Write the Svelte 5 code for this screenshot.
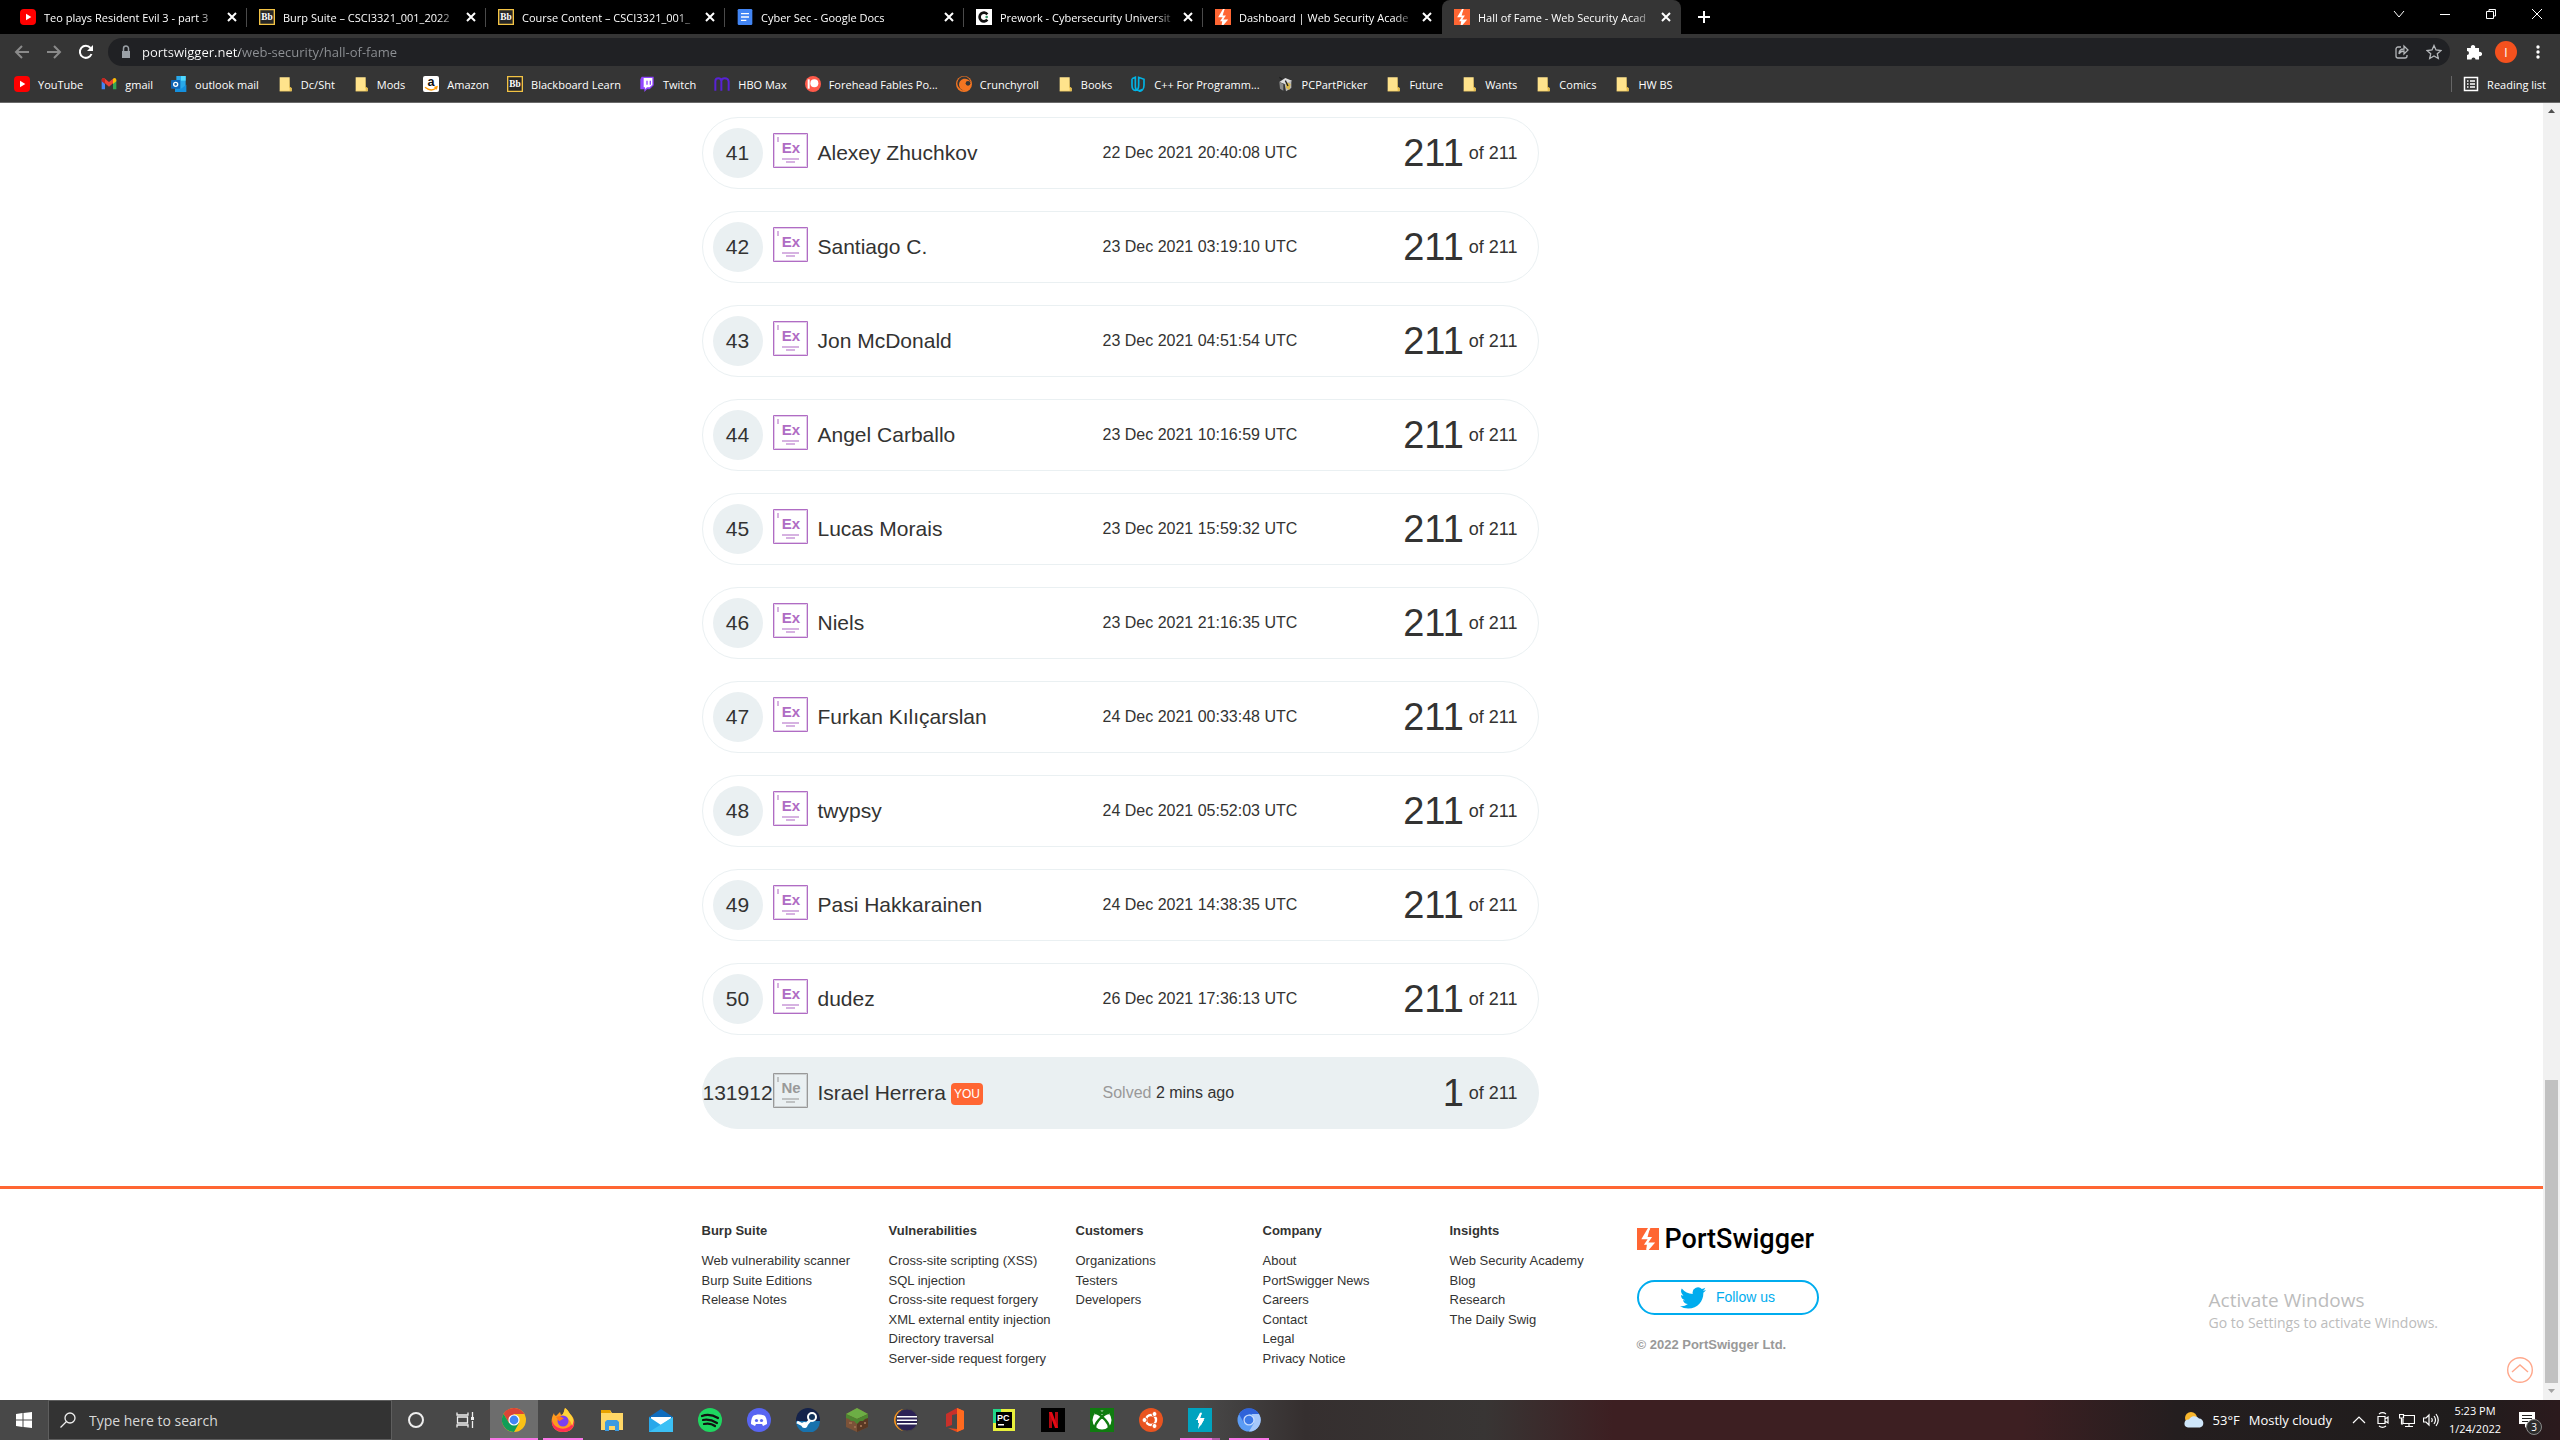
<script>
  const bolt = '<path d="M0 0h24v24H0z" fill="#f63"/><path d="M13.500 0 7 11h7l-4 6h7l-6 7" fill="none" stroke="#fff" stroke-width="2.600"/><path d="M14 0 6 12h5zm-3 17h7l-8 7z" fill="#fff"/>';
  const bb = '<path d="M1 1h22v22H1z" fill="#262626" stroke="#f3c344" stroke-width="2"/><text x="12" y="17" font-size="14" font-weight="700" font-family="Liberation Serif, serif" text-anchor="middle" fill="#fff">Bb</text>';
  const youtube = '<rect width="24" height="24" rx="6" fill="#f00"/><path d="m9 7 8 5-8 5z" fill="#fff"/>';
  const folder = '<path d="M4 2h15v15l3 1v5H4z" fill="#ffe38c"/><path d="M19 2v14l3 2v5H4v-1h15v-4l-1-1" fill="#e9bf4c"/>';

  const art = {
    bolt,
    bb,
    youtube,
    folder,
    docs: '<rect x="1" width="22" height="24" rx="2" fill="#4285f4"/><path d="M6 6h12v2H6zm0 5h12v2H6zm0 5h8v2H6z" fill="#fff"/>',
    prework: '<path d="M0 0h24v24H0z" fill="#fff"/><path d="M17 8a6.500 6.500 0 1 0 0 8" fill="none" stroke="#111" stroke-width="4"/><circle cx="16" cy="12" r="2" fill="#3a9b6a"/>',
    gmail: '<path d="M1 6v14h5V11z" fill="#4285f4"/><path d="M23 6v14h-5V11z" fill="#34a853"/><path d="M1 6c0-3 3-3 5-2l6 5 6-5v7l-6 5-6-5z" fill="#ea4335"/><path d="m18 4c2-2 5-1 5 2v2l-5 4z" fill="#fbbc04"/><path d="M1 6c0-3 3-3 5-2v8L1 8z" fill="#c5221f"/>',
    outlook: '<path d="M8 0h14v22H8z" fill="#28a8ea"/><path d="M15 0h7v7h-7z" fill="#50d9ff"/><path d="m6 14 9 5 8-6v11H6z" fill="#1490df"/><rect y="6" width="14" height="13" rx="1" fill="#0f64b4"/><circle cx="7" cy="12.500" r="3" fill="none" stroke="#fff" stroke-width="2"/>',
    amazon: '<rect width="24" height="24" rx="3" fill="#fff"/><text x="12" y="15" font-size="19" font-weight="700" font-family="Liberation Sans, sans-serif" text-anchor="middle" fill="#111">a</text><path d="M3 17c6 5 12 5 17 1m-3-1 4-1-1 4" fill="none" stroke="#f90" stroke-width="2"/>',
    twitch: '<path d="M4 1h18v13l-6 6h-4l-4 4v-4H2V5z" fill="#9146ff"/><path d="M7 3h13v10l-4 4h-4l-3 3v-3H7z" fill="#fff"/><path d="M11 7h2v6h-2zm5 0h2v6h-2z" fill="#9146ff"/>',
    hbo: '<path d="M2 22V8c0-6 9-6 9 0v14M11 8c0-6 10-6 11 0v14" fill="none" stroke="#5822d4" stroke-width="3"/>',
    patreon: '<circle cx="12" cy="12" r="12" fill="#ff5a4a"/><circle cx="14" cy="11" r="6" fill="#fff"/><path d="M4 5h3v14H4z" fill="#fff"/>',
    crunchyroll: '<circle cx="12" cy="12" r="12" fill="#f47521"/><path d="M5 18a10 10 0 1 1 17-8 9 9 0 1 0-8 12 10 10 0 0 1-9-4" fill="#353535"/><circle cx="15" cy="14" r="7" fill="#f47521"/><circle cx="18" cy="11" r="3.500" fill="#353535"/>',
    udacity: '<path d="M3 4v10c0 10 10 10 10 0V2l8 3v9c0 6-4 9-8 9M3 4l5-2v14c0 5 6 8 10 4" fill="none" stroke="#02b3e4" stroke-width="2.500"/>',
    pcpart: '<path d="m2 9 9-6 10 4-8 6z" fill="#ddd"/><path d="m2 9 6 3v10l-5-3z" fill="#8b8b8b"/><path d="m10 12 10-5v11l-8 5z" fill="#bbb"/><path d="m12 9 7 3-2 9-5-3z" fill="#d9b84b"/><path d="M6 5 2 2m9 5 4 8" stroke="#222" stroke-width="2"/>',
    chrome: '<circle cx="12" cy="12" r="12" fill="#fbc116"/><path d="M1.600 6A12 12 0 0 1 22.400 6H12L7 15z" fill="#db4437"/><path d="M1.600 6A12 12 0 0 0 12 24l5-9H7z" fill="#109d58"/><circle cx="12" cy="12" r="5.600" fill="#fff"/><circle cx="12" cy="12" r="4.400" fill="#4285f4"/>',
    firefox: '<path d="M14 0c4 3 4 5 6 7 6 6 4 17-8 17C1 24-2 13 3 5c0 2 1 2 2 3l4-4 1 3c3 0 3-5 4-7" fill="#ff9a1f"/><path d="M1 12c1 9 17 14 22 0 1 8-4 12-11 12S0 19 1 12" fill="#ff2d55"/><path d="M14 0c4 3 4 5 6 7 3 4 3 8 1 11-1-7-7-9-11-11 3 0 3-5 4-7" fill="#ffd43a"/><circle cx="12" cy="13" r="5.500" fill="#7a3ff0"/><path d="M5 9c4-2 6 0 8 2-3 0-3 2-5 2" fill="#ff7a18"/>',
    explorer: '<path d="M1 2h9l2 3h11v17H1z" fill="#ffd766"/><path d="M1 2h9l1 3H1z" fill="#e8a200"/><path d="M5 23v-9l2-2h10l2 2v9h-4v-5H9v5z" fill="#3c9be0"/>',
    mail: '<path d="m0 9 12-8 12 8v14H0z" fill="#0f6cbd"/><path d="M2 9h20v8H2z" fill="#fff"/><path d="m0 9 12 8 12-8v15H0z" fill="#28a8ea"/><path d="M0 24 24 9v15z" fill="#3bc0f5"/>',
    spotify: '<circle cx="12" cy="12" r="12" fill="#1ed760"/><path d="M4 8c5-2 11-1 16 2M5 12c5-1 9 0 14 3M6 16c4-1 7-1 11 2" fill="none" stroke="#111" stroke-width="2.200" stroke-linecap="round"/>',
    discord: '<circle cx="12" cy="12" r="12" fill="#5865f2"/><path d="M6 8c3-2 9-2 12 0 2 3 2 6 2 8l-4 2-1-2H9l-1 2-4-2c0-2 0-5 2-8" fill="#fff"/><circle cx="9.500" cy="12.500" r="1.600" fill="#5865f2"/><circle cx="14.500" cy="12.500" r="1.600" fill="#5865f2"/>',
    steam: '<circle cx="12" cy="12" r="12" fill="#14224a"/><path d="M0 13a12 12 0 0 0 24 0z" fill="#1872ad"/><path d="m1 14 8 4 7-8" stroke="#fff" stroke-width="3" fill="none"/><circle cx="16" cy="9" r="4" fill="#14345c" stroke="#fff" stroke-width="2"/><circle cx="8.500" cy="17" r="3" fill="#fff"/>',
    minecraft: '<path d="m1 6 11-6 11 6v13l-11 5L1 19z" fill="#7b5238"/><path d="M12 11v13l11-5V6z" fill="#593823"/><path d="m1 6 11-6 11 6-11 5z" fill="#6cae45"/><path d="m1 6 11 5 11-5v4l-3 1-2 2-3 0-3 3-3-3-3 0-2-2-3-1z" fill="#4d8630"/><path d="M4 14h3v2H4zm5 4h2v2H9zm6-1h2v2h-2zm4-3h2v2h-2z" fill="#9a6c4c"/>',
    eclipse: '<circle cx="11" cy="12" r="11" fill="#f7941e"/><circle cx="13" cy="12" r="11" fill="#2c2255" stroke="#444" stroke-width="1"/><path d="M3 8h20v1.500H3zm0 3.500h20V13H3zM3 15h20v1.500H3z" fill="#fff"/>',
    office: '<path d="m14 0 7 3v18l-7 3-9-4 9 1z" fill="#e8481c"/><path d="M14 0v24l7-3V3z" fill="#ff6a1f"/><path d="M3 6v13l6-2V7l5-1V0z" fill="#c8302a"/>',
    pycharm: '<path d="M1 1h22v22H1z" fill="#e8f03c"/><path d="M1 1h8v14H1z" fill="#21d789"/><path d="M4 4h16v16H4z"/><text x="5" y="13" font-size="9" font-weight="700" font-family="Liberation Sans, sans-serif" fill="#fff">PC</text><path d="M6 16h6v1.500H6z" fill="#fff"/>',
    netflix: '<path d="M0 0h24v24H0z"/><path d="M8 4h3v16H8zm6 0h3v16h-3z" fill="#b00710"/><path d="M8 4h3l6 16h-3z" fill="#e50914"/>',
    xbox: '<path d="M0 0h24v24H0z" fill="#107c10"/><circle cx="12" cy="12" r="9.500" fill="#fff"/><path d="M5 5c4 0 7 4 7 4s3-4 7-4M5 20c0-6 7-11 7-11s7 5 7 11M7 3c2 0 5 2 5 2s3-2 5-2" fill="none" stroke="#107c10" stroke-width="2.400"/>',
    ubuntu: '<circle cx="12" cy="12" r="12" fill="#e95420"/><circle cx="12" cy="12" r="5" fill="none" stroke="#fff" stroke-width="2.400"/><g fill="#fff" stroke="#e95420"><circle cx="5.500" cy="12" r="2.500"/><circle cx="15.500" cy="6" r="2.500"/><circle cx="15.500" cy="18" r="2.500"/></g>',
    burp: '<path d="M0 0h24v24H0z" fill="#00a3bf"/><path d="m14 4-6 8h5l-1-1zm-4 8h6l-6 9 1-6h-1z" fill="#fff"/><path d="m13 5-3 6h5l-3 6" fill="none" stroke="#fff" stroke-width="2"/>',
    chromium: '<circle cx="12" cy="12" r="11.500" fill="#5b9cf5"/><path d="M2 6A11.500 11.500 0 0 1 22 6H12l-5 9z" fill="#2f62d9"/><path d="M22 6a11.500 11.500 0 0 1-10 17.500L17 15l-2-9z" fill="#a6c8fb"/><circle cx="12" cy="12" r="5.600" fill="#c8dcfd"/><circle cx="12" cy="12" r="4.300" fill="#3b78e7"/>',
    cortana: '<circle cx="12" cy="12" r="7" fill="none" stroke="#eee" stroke-width="2"/>',
    taskview: '<path d="M4 4.500V7h11V4.500M4 19.500V17h11v2.500M4.500 9h10v6h-10zM19.500 4v5m0 4v7" fill="none" stroke="#eee" stroke-width="1.300"/><path d="M18 9h3v3h-3z" fill="#eee"/>'
  };

  const tabs = [
    { icon: 'youtube', title: 'Teo plays Resident Evil 3 - part 3' },
    { icon: 'bb', title: 'Burp Suite – CSCI3321_001_2022' },
    { icon: 'bb', title: 'Course Content – CSCI3321_001_' },
    { icon: 'docs', title: 'Cyber Sec - Google Docs' },
    { icon: 'prework', title: 'Prework - Cybersecurity Universit' },
    { icon: 'bolt', title: 'Dashboard | Web Security Acade' },
    { icon: 'bolt', title: 'Hall of Fame - Web Security Acad', active: true }
  ];

  const bookmarks = [
    ['youtube', 'YouTube'], ['gmail', 'gmail'], ['outlook', 'outlook mail'], ['folder', 'Dc/Sht'],
    ['folder', 'Mods'], ['amazon', 'Amazon'], ['bb', 'Blackboard Learn'], ['twitch', 'Twitch'],
    ['hbo', 'HBO Max'], ['patreon', 'Forehead Fables Po...'], ['crunchyroll', 'Crunchyroll'],
    ['folder', 'Books'], ['udacity', 'C++ For Programm...'], ['pcpart', 'PCPartPicker'],
    ['folder', 'Future'], ['folder', 'Wants'], ['folder', 'Comics'], ['folder', 'HW BS']
  ];

  const players = [
    { rank: 41, name: 'Alexey Zhuchkov', date: '22 Dec 2021 20:40:08 UTC', solved: 211 },
    { rank: 42, name: 'Santiago C.', date: '23 Dec 2021 03:19:10 UTC', solved: 211 },
    { rank: 43, name: 'Jon McDonald', date: '23 Dec 2021 04:51:54 UTC', solved: 211 },
    { rank: 44, name: 'Angel Carballo', date: '23 Dec 2021 10:16:59 UTC', solved: 211 },
    { rank: 45, name: 'Lucas Morais', date: '23 Dec 2021 15:59:32 UTC', solved: 211 },
    { rank: 46, name: 'Niels', date: '23 Dec 2021 21:16:35 UTC', solved: 211 },
    { rank: 47, name: 'Furkan Kılıçarslan', date: '24 Dec 2021 00:33:48 UTC', solved: 211 },
    { rank: 48, name: 'twypsy', date: '24 Dec 2021 05:52:03 UTC', solved: 211 },
    { rank: 49, name: 'Pasi Hakkarainen', date: '24 Dec 2021 14:38:35 UTC', solved: 211 },
    { rank: 50, name: 'dudez', date: '26 Dec 2021 17:36:13 UTC', solved: 211 },
    { rank: 131912, name: 'Israel Herrera', date: '2 mins ago', solved: 1, you: true }
  ];

  const footer = [
    ['Burp Suite', ['Web vulnerability scanner', 'Burp Suite Editions', 'Release Notes']],
    ['Vulnerabilities', ['Cross-site scripting (XSS)', 'SQL injection', 'Cross-site request forgery', 'XML external entity injection', 'Directory traversal', 'Server-side request forgery']],
    ['Customers', ['Organizations', 'Testers', 'Developers']],
    ['Company', ['About', 'PortSwigger News', 'Careers', 'Contact', 'Legal', 'Privacy Notice']],
    ['Insights', ['Web Security Academy', 'Blog', 'Research', 'The Daily Swig']]
  ];

  const apps = [
    ['cortana', 'Cortana', ''], ['taskview', 'Task View', ''], ['chrome', 'Chrome', 'current'],
    ['firefox', 'Firefox', 'running'], ['explorer', 'File Explorer', ''], ['mail', 'Mail', ''],
    ['spotify', 'Spotify', ''], ['discord', 'Discord', ''], ['steam', 'Steam', ''],
    ['minecraft', 'Minecraft', ''], ['eclipse', 'Eclipse', ''], ['office', 'Office', ''],
    ['pycharm', 'PyCharm', ''], ['netflix', 'Netflix', ''], ['xbox', 'Xbox', ''],
    ['ubuntu', 'Ubuntu', ''], ['burp', 'Burp Suite', 'running stacked'], ['chromium', 'Chromium', 'running']
  ];

  let address = $state('portswigger.net/web-security/hall-of-fame');
  let query = $state('');
</script>

{#snippet pic(name, size)}
  <svg class="pic {size}" viewBox="0 0 24 24" aria-hidden="true">{@html art[name]}</svg>
{/snippet}

<div class="desktop">
  <header class="browser">
    <div class="tabstrip">
      {#each tabs as tab}
        <div class="tab" class:active={tab.active}>
          {@render pic(tab.icon, 'small')}
          <span class="title">{tab.title}</span>
          <button class="close" aria-label="Close tab">
            <svg width="16" height="16" viewBox="0 0 16 16"><path d="m4 4 8 8m0-8-8 8" /></svg>
          </button>
        </div>
      {/each}
      <button class="newtab" aria-label="New tab">
        <svg width="16" height="16" viewBox="0 0 16 16"><path d="M8 2v12M2 8h12" /></svg>
      </button>
      <div class="winbuttons">
        <button aria-label="Search tabs"><svg width="12" height="12" viewBox="0 0 12 12"><path d="m1 3 5 6 5-6" /></svg></button>
        <button aria-label="Minimize"><svg width="12" height="12" viewBox="0 0 12 12"><path d="M1 6.500h10" /></svg></button>
        <button aria-label="Restore"><svg width="12" height="12" viewBox="0 0 12 12"><path d="M1.500 3.500h7v7h-7zM4 3.500v-2h6.500V8h-2" /></svg></button>
        <button aria-label="Close"><svg width="12" height="12" viewBox="0 0 12 12"><path d="m1 1 10 10m0-10L1 11" /></svg></button>
      </div>
    </div>

    <div class="toolbar">
      <button class="tool dim" aria-label="Back"><svg width="16" height="16" viewBox="0 0 16 16"><path d="M15 8H2m6-6L2 8l6 6" /></svg></button>
      <button class="tool dim" aria-label="Forward"><svg width="16" height="16" viewBox="0 0 16 16"><path d="M1 8h13M8 2l6 6-6 6" /></svg></button>
      <button class="tool" aria-label="Reload"><svg width="16" height="16" viewBox="0 0 16 16"><path d="M13.500 10A6 6 0 1 1 12.500 4" stroke-width="2" /><path d="M15 1v6H9z" fill="#fff" stroke="none" /></svg></button>
      <label class="address">
        <svg width="16" height="16" viewBox="0 0 16 16"><path d="M4 7h8v7H4z" fill="#9aa0a6" /><path d="M5.500 7V4.500a2.500 2.500 0 0 1 5 0V7" stroke="#9aa0a6" stroke-width="1.500" fill="none" /></svg>
        <input type="text" aria-label="Address" bind:value={address} />
        <button class="tool grey" aria-label="Share"><svg width="16" height="16" viewBox="0 0 16 16"><path d="M7 3H4a2 2 0 0 0-2 2v7a2 2 0 0 0 2 2h7a2 2 0 0 0 2-2v-1M5 10c0-3 2-5 5-5V2l4 4-4 4V7c-2 0-4 1-5 3" /></svg></button>
        <button class="tool grey" aria-label="Bookmark"><svg width="16" height="16" viewBox="0 0 16 16"><path d="m8 1.500 2 4.500 5 .5-3.700 3.300 1 4.700L8 12l-4.300 2.500 1-4.700L1 6.500 6 6z" /></svg></button>
      </label>
      <div class="toolend">
        <button class="tool" aria-label="Extensions"><svg width="16" height="16" viewBox="0 0 16 16"><path d="M1 4h4a2.200 2.200 0 1 1 4 0h4v4a2.200 2.200 0 1 1 0 4v3.500H9.500a2 2 0 1 0-4 0H1V11a2 2 0 1 0 0-4z" fill="#fff" stroke="none" /></svg></button>
        <button class="avatar" aria-label="Profile">I</button>
        <button class="tool" aria-label="Menu"><svg width="16" height="16" viewBox="0 0 16 16"><g fill="#fff" stroke="none"><circle cx="8" cy="3" r="1.700" /><circle cx="8" cy="8" r="1.700" /><circle cx="8" cy="13" r="1.700" /></g></svg></button>
      </div>
    </div>

    <nav class="bookmarks">
      {#each bookmarks as [icon, label]}
        <a href="#top">{@render pic(icon, 'small')}{label}</a>
      {/each}
      <button class="reading">
        <svg width="16" height="16" viewBox="0 0 16 16"><path d="M1.500 1.500h13v13h-13z" stroke-width="1.500" /><path d="M4 5h1.500M4 8h1.500M4 11h1.500M7 5h5M7 8h5M7 11h5" stroke-width="1.500" /></svg>
        Reading list
      </button>
    </nav>
  </header>

  <div class="viewport">
    <div class="page" id="top">
      <main class="wrap">
        <table class="fame" aria-label="Hall of Fame">
          <tbody>
            {#each players as p}
              <tr class:you={p.you}>
                <td class="rank"><span>{p.rank}</span></td>
                <td class="level">
                  <svg width="35" height="35" viewBox="0 0 35 35">
                    <path d="M.5.5h34v34H.5z" />
                    <path class="inner" d="M1.500 1.500h32v32h-32z" />
                    <path class="rule" d="M5 4v5" />
                    <text x="18" y="20" text-anchor="middle">{p.you ? 'Ne' : 'Ex'}</text>
                    <path class="rule" d="M9 26h17M13 29h9" />
                  </svg>
                </td>
                <td class="name">{p.name}{#if p.you}<span class="tag">YOU</span>{/if}</td>
                <td class="date">{#if p.you}<span>Solved</span>{' '}{/if}{p.date}</td>
                <td class="score"><strong>{p.solved}</strong><span>of 211</span></td>
              </tr>
            {/each}
          </tbody>
        </table>
      </main>

      <footer>
        <div class="wrap columns">
          {#each footer as [heading, links]}
            <section>
              <h2>{heading}</h2>
              <ul>
                {#each links as link}<li><a href="#top">{link}</a></li>{/each}
              </ul>
            </section>
          {/each}
          <section class="brand">
            <a class="logo" href="#top">
              <svg width="22" height="22" viewBox="0 0 24 24" aria-hidden="true">{@html art.bolt}</svg>PortSwigger
            </a>
            <a class="follow" href="#top">
              <svg width="26" height="26" viewBox="0 0 24 24" aria-hidden="true"><path fill="#00acee" d="M23.950 4.570a10 10 0 0 1-2.820.77 4.960 4.960 0 0 0 2.160-2.720c-.95.550-2 .950-3.130 1.180a4.920 4.920 0 0 0-8.380 4.480A13.930 13.930 0 0 1 1.640 3.160a4.920 4.920 0 0 0 1.520 6.570 4.900 4.900 0 0 1-2.230-.61v.060a4.920 4.920 0 0 0 3.950 4.830 5 5 0 0 1-2.210.08 4.940 4.940 0 0 0 4.600 3.420A9.870 9.870 0 0 1 0 19.540a14 14 0 0 0 7.550 2.210c9.050 0 14-7.500 14-13.980 0-.210 0-.420-.020-.630a9.940 9.940 0 0 0 2.460-2.550z" /></svg>
              Follow us
            </a>
            <p>© 2022 PortSwigger Ltd.</p>
          </section>
        </div>
      </footer>
    </div>

    <div class="scrollbar" aria-hidden="true">
      <svg width="17" height="17" viewBox="0 0 17 17"><path d="m5 10 3.500-4 3.500 4z" fill="#505050" /></svg>
      <div class="thumb"></div>
      <svg width="17" height="17" viewBox="0 0 17 17"><path d="m5 6 3.500 4L12 6z" fill="#a3a3a3" /></svg>
    </div>

    <div class="watermark">
      <p class="big">Activate Windows</p>
      <p>Go to Settings to activate Windows.</p>
    </div>
    <a class="totop" href="#top" aria-label="Back to top">
      <svg width="26" height="26" viewBox="0 0 26 26"><circle cx="13" cy="13" r="12.300" /><path d="m5 15 8-7 8 7" /></svg>
    </a>
  </div>

  <div class="taskbar">
    <button class="start" aria-label="Start">
      <svg width="16" height="16" viewBox="0 0 16 16"><path d="m0 2 6.500-1v6.500H0zm7.500-1L16 0v7.500H7.500zM0 8.500h6.500V15L0 14zm7.500 0H16V16l-8.500-1z" fill="#fff" stroke="none" /></svg>
    </button>
    <label class="search">
      <svg width="16" height="16" viewBox="0 0 16 16"><circle cx="10" cy="6" r="5" /><path d="m6.500 9.500-6 6" /></svg>
      <input type="text" placeholder="Type here to search" aria-label="Type here to search" bind:value={query} />
    </label>
    <div class="apps">
      {#each apps as [icon, label, state]}
        <button class="app {state}" aria-label={label}>{@render pic(icon, 'large')}</button>
      {/each}
    </div>
    <div class="tray">
      <button class="weather">
        <svg width="20" height="16" viewBox="0 0 20 16"><circle cx="7" cy="6" r="6" fill="#f8b62d" /><path d="M4 15.500a4 4 0 0 1 1-8 6 6 0 0 1 10-1 4.600 4.600 0 0 1 1 9z" fill="#cfe6fa" stroke="none" /></svg>
        <span>53°F</span><span>Mostly cloudy</span>
      </button>
      <button aria-label="Hidden icons"><svg width="16" height="16" viewBox="0 0 16 16"><path d="m2 11 6-6 6 6" /></svg></button>
      <button aria-label="Meet now"><svg width="16" height="16" viewBox="0 0 16 16"><path d="M3 4.500h7v7H3zM10 7l3-2v6l-3-2M4 2c2-1.500 5-1.500 7 0M4 14c2 1.500 5 1.500 7 0" /></svg></button>
      <button aria-label="Network"><svg width="16" height="16" viewBox="0 0 16 16"><path d="M5 3.500h10.500v8H4V7M10 12v3M6 14.500h8M.5 2.500h4V6h-4zM2.500 6v6H4" /></svg></button>
      <button aria-label="Volume"><svg width="16" height="16" viewBox="0 0 16 16"><path d="M.5 6H3l3-3v10l-3-3H.5zM8.500 6q1.500 2 0 4M11 4q3 4 0 8M13 2q4.500 6 0 12" /></svg></button>
      <div class="clock"><span>5:23 PM</span><span>1/24/2022</span></div>
      <button class="notes" aria-label="3 notifications">
        <svg width="16" height="16" viewBox="0 0 16 16"><path d="M0 0h16v12H9l-3 4v-4H0z" fill="#fff" stroke="none" /><path d="M3 3.500h10M3 6.500h10M3 9.500h6" stroke="#222" /></svg>
        <span>3</span>
      </button>
    </div>
  </div>
</div>

<style>
  :global(body) { margin: 0; }
  .desktop {
    display: flex;
    flex-direction: column;
    min-height: 100vh;
    font-family: 'Open Sans', 'Noto Sans', sans-serif;
    font-size: 11px;
  }
  button { background: none; border: 0; padding: 0; color: inherit; font: inherit; }
  button svg { display: block; fill: none; stroke: #fff; }
  a { color: inherit; text-decoration: none; }
  p, h2, ul { margin: 0; padding: 0; list-style: none; }
  svg.pic { flex: none; display: block; fill: #000; stroke: none; }
  .small { width: 16px; height: 16px; }
  .large { width: 24px; height: 24px; }

  .browser { background: #353535; color: #fff; border-bottom: 1px solid #6a6a6a; }
  .tabstrip { display: flex; height: 34px; padding-left: 8px; background: #000; }
  .tab {
    display: flex;
    align-items: center;
    box-sizing: border-box;
    width: 239px;
    padding: 0 7px 0 12px;
    position: relative;
  }
  .tab:not(.active)::after {
    content: '';
    position: absolute;
    right: 0;
    top: 8px;
    width: 1px;
    height: 19px;
    background: #4a4a4a;
  }
  .tab:nth-child(6)::after { display: none; }
  .tab.active { background: #353535; border-radius: 8px 8px 0 0; }
  .title {
    flex: 1;
    margin: 0 4px 0 8px;
    overflow: hidden;
    white-space: nowrap;
    mask-image: linear-gradient(90deg, #000 88%, transparent);
  }
  .close svg { stroke-width: 2; }
  .newtab { margin-left: 15px; }
  .newtab svg { stroke-width: 2; }
  .winbuttons { display: flex; height: 28px; margin-left: auto; }
  .winbuttons button { width: 46px; display: grid; place-items: center; }

  .toolbar { display: flex; align-items: center; gap: 16px; padding: 4px 14px 0; }
  .toolend { display: flex; align-items: center; gap: 13px; }
  .tool svg { stroke-width: 2; }
  .dim svg { stroke: #8a8a8a; }
  .grey svg { stroke: #b4b7ba; stroke-width: 1.3; }
  .address {
    display: flex;
    align-items: center;
    flex: 1;
    height: 28px;
    gap: 16px;
    margin-left: -2px;
    padding: 0 8px 0 10px;
    border-radius: 14px;
    background: #202124;
  }
  .address input {
    flex: 1;
    min-width: 0;
    margin-left: -8px;
    padding: 0;
    border: 0;
    outline: 0;
    font: 13px 'Open Sans', 'Noto Sans', sans-serif;
    color: transparent;
    background: linear-gradient(90deg, #fff 98px, #8f9296 98px);
    background-clip: text;
  }
  .avatar { width: 22px; height: 22px; border-radius: 50%; background: #f4511e; font-size: 12px; }

  .bookmarks { display: flex; align-items: center; gap: 18px; height: 36px; padding: 0 14px; }
  .bookmarks a { display: flex; align-items: center; gap: 8px; white-space: nowrap; }
  .reading {
    display: flex;
    align-items: center;
    gap: 8px;
    height: 16px;
    margin-left: auto;
    padding-left: 11px;
    border-left: 1px solid #666;
  }

  .viewport { display: flex; flex: 1; position: relative; background: #fff; }
  .page {
    flex: 1;
    padding-top: 14px;
    color: #333332;
    font-family: 'Liberation Sans', Arial, sans-serif;
  }
  .wrap { max-width: 1140px; margin: 0 auto; }
  .fame { display: block; max-width: 837px; }
  tbody { display: flex; flex-direction: column; gap: 22px; }
  tr {
    display: grid;
    grid-template-columns: 70px 45px 285px 1fr auto;
    align-items: center;
    box-sizing: border-box;
    height: 72px;
    padding-right: 20px;
    border: 1px solid #eaf0f2;
    border-radius: 36px;
    font-size: 21px;
  }
  td { padding: 0; }
  .rank span {
    display: block;
    width: 50px;
    margin: 0 auto;
    border-radius: 50%;
    background: #eaf0f2;
    line-height: 50px;
    text-align: center;
  }
  .you { background: #eaf0f2; }
  .you .rank span { width: auto; }
  .level { padding-bottom: 5px; }
  .level svg { display: block; fill: none; stroke: #b06cc4; }
  .level .inner { stroke-opacity: 0.35; }
  .level .rule { stroke-opacity: 0.7; stroke-width: 1.5; }
  .level text { fill: #b06cc4; stroke: none; font-size: 15px; font-weight: 700; }
  .you .level svg { stroke: #999; }
  .you .level text { fill: #999; }
  .tag {
    display: inline-block;
    margin-left: 5px;
    padding: 0 3px;
    border-radius: 4px;
    background: #f63;
    color: #fff;
    font-size: 12px;
    line-height: 22px;
    vertical-align: middle;
  }
  .date { font-size: 16px; }
  .date span { color: #999; }
  .score { display: flex; align-items: center; gap: 5px; font-size: 18px; }
  .score strong { font-size: 38px; font-weight: 400; line-height: 44px; }

  footer { margin-top: 57px; padding-top: 34px; border-top: 3px solid #f63; font-size: 13px; line-height: 1.5; }
  .columns { display: grid; grid-template-columns: repeat(6, 182px); gap: 5px; }
  h2 { margin-bottom: 12px; font-size: 13px; line-height: 16px; }
  .brand { padding-top: 4px; }
  .logo {
    display: flex;
    align-items: center;
    gap: 6px;
    height: 24px;
    color: #000;
    font: 500 27px/24px Roboto, sans-serif;
  }
  .follow {
    display: flex;
    align-items: center;
    justify-content: center;
    gap: 10px;
    box-sizing: border-box;
    height: 35px;
    margin: 29px 0 20px;
    border: 2px solid #00acee;
    border-radius: 18px;
    color: #00acee;
    font-size: 14px;
  }
  .brand p { color: #999; font-weight: 700; }

  .scrollbar { display: flex; flex-direction: column; width: 17px; background: #f1f1f1; }
  .thumb { height: 303px; margin: auto 2px 0; background: #c1c1c1; }
  .watermark { position: absolute; right: 122px; bottom: 67px; color: #bcbcbc; font-size: 14px; line-height: 20px; }
  .watermark .big { font-size: 19px; line-height: 25px; }
  .totop { position: absolute; right: 27px; bottom: 17px; }
  .totop svg { display: block; fill: none; stroke: #ffa88c; stroke-width: 1.4; }

  .taskbar {
    display: flex;
    height: 40px;
    color: #fff;
    background: linear-gradient(90deg, #484848 0 47%, #352f2f 51%, #383534 58%, #3d1f22 63%, #3d1f22 79%, #241e1f 85%, #1f1c1c 96%, #2b1a1d);
  }
  .start { width: 48px; display: grid; place-items: center; }
  .search {
    display: flex;
    align-items: center;
    gap: 13px;
    box-sizing: border-box;
    width: 344px;
    padding-left: 11px;
    border: 1px solid #5e5e5e;
    background: #333;
  }
  .search svg { fill: none; stroke: #eee; stroke-width: 1.3; }
  .search input { border: 0; outline: 0; padding: 0; background: none; color: #fff; font: 14px 'Open Sans', 'Noto Sans', sans-serif; }
  .search input::placeholder { color: #d8d8d8; opacity: 1; }
  .apps { display: flex; gap: 1px; }
  .app { width: 48px; display: grid; place-items: center; position: relative; }
  .current { background: #6d6d6d; }
  .current::after, .running::after {
    content: '';
    position: absolute;
    left: 4px;
    right: 4px;
    bottom: 0;
    height: 2px;
    background: #f976e8;
  }
  .current::after { left: 0; right: 0; }
  .stacked::after { background: linear-gradient(90deg, #f976e8 80%, #b25aa8 80%); }
  .tray { display: flex; align-items: center; gap: 8px; margin-left: auto; padding-right: 25px; }
  .tray svg { stroke-width: 1.2; }
  .weather { display: flex; align-items: center; gap: 9px; margin-right: 11px; font-size: 13px; }
  .weather circle { stroke: none; }
  .clock { display: flex; flex-direction: column; width: 56px; text-align: center; line-height: 18px; }
  .notes { position: relative; margin-left: 8px; }
  .notes span {
    position: absolute;
    left: 7px;
    top: 7px;
    width: 14px;
    border: 1px solid #8a8a8a;
    border-radius: 50%;
    background: #2c2c2c;
    font-size: 10px;
    line-height: 14px;
    text-align: center;
  }
</style>
